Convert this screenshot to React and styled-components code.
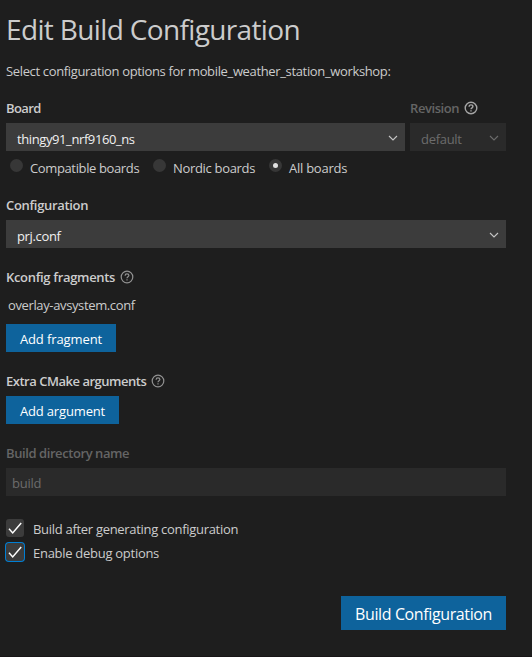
import React from "react";
import styled, { createGlobalStyle } from "styled-components";

const GlobalStyle = createGlobalStyle`
  * { box-sizing: border-box; }
  body {
    margin: 0;
    background: #1e1e1e;
    color: #cccccc;
    font: 400 13px/18px "Open Sans", "Noto Sans", sans-serif;
  }
`;

const Page = styled.main`
  height: 657px;
  padding: 10px 26px 0 6px;
  display: flex;
  flex-direction: column;
  background: #1e1e1e;
  border-bottom: 1px solid #181517;
`;

const Title = styled.h1`
  margin: 0;
  height: 40px;
  font-size: 28px;
  line-height: 38px;
  font-weight: 400;
  letter-spacing: -0.64px;
  white-space: nowrap;
`;

const Intro = styled.p`
  margin: 12px 0 0;
  letter-spacing: -0.35px;
  white-space: nowrap;
`;

const Section = styled.section`
  margin-top: ${(p) => p.$gap}px;
  width: ${(p) => (p.$width ? `${p.$width}px` : "auto")};
`;

const BoardRow = styled.div`
  display: flex;
  gap: 5px;
  margin-top: 19px;
`;

const Label = styled.div`
  display: flex;
  align-items: center;
  gap: 5px;
  height: 18px;
  margin-bottom: 6px;
  font-weight: 600;
  letter-spacing: ${(p) => p.$spacing}px;
  color: ${(p) => (p.$disabled ? "#656565" : "#cccccc")};
  white-space: nowrap;
`;

const Field = styled.div`
  display: flex;
  justify-content: space-between;
  align-items: center;
  height: 28px;
  padding: ${(p) => (p.$input ? "2px 6px 0" : "4px 6px 0 11px")};
  background: ${(p) => (p.$disabled ? "#2a2a2a" : "#3c3c3c")};
  color: ${(p) => (p.$disabled ? "#6c6c6c" : "#f0f0f0")};
  letter-spacing: ${(p) => p.$spacing}px;
`;

const Chevron = styled.svg`
  width: 12px;
  height: 12px;
  margin-top: -3px;
  fill: none;
  stroke: ${(p) => (p.$disabled ? "#6c6c6c" : "#c5c5c5")};
  stroke-width: 1.1;
`;

const HelpSvg = styled.svg`
  width: 14px;
  height: 14px;
  fill: none;
  stroke: ${(p) => (p.$bright ? "#a5a5a5" : "#929292")};
  stroke-width: ${(p) => (p.$bright ? 1.4 : 1.2)};
`;

const RadioGroup = styled.div`
  display: flex;
  height: 30px;
  padding: 5px 0 0 4px;
`;

const Radio = styled.label`
  display: flex;
  width: ${(p) => p.$width}px;
  letter-spacing: ${(p) => p.$spacing}px;
  padding-top: 3px;
  white-space: nowrap;
`;

const RadioDot = styled.span`
  display: grid;
  place-items: center;
  flex: none;
  width: 13px;
  height: 13px;
  margin: 0 7px 0 0;
  border-radius: 50%;
  background: #373737;

  &::after {
    content: "";
    width: 5px;
    height: 5px;
    border-radius: 50%;
    background: ${(p) => (p.$on ? "#e2e2e2" : "transparent")};
  }
`;

const Fragment = styled.div`
  margin: 0 0 10px 2px;
  padding-top: 4px;
  letter-spacing: -0.37px;
`;

const Button = styled.button`
  display: block;
  width: ${(p) => p.$width}px;
  height: ${(p) => (p.$large ? 34 : 28)}px;
  padding: ${(p) => (p.$large ? 2 : 1)}px 0 0;
  border: 0;
  background: #0e639c;
  color: #ffffff;
  font: inherit;
  font-size: ${(p) => (p.$large ? 16 : 13)}px;
  letter-spacing: ${(p) => p.$spacing}px;
`;

const Checks = styled.div`
  margin-top: 23px;
  display: flex;
  flex-direction: column;
  gap: 6px;
`;

const Check = styled.label`
  display: flex;
  gap: 9px;
  height: 18px;
  letter-spacing: ${(p) => p.$spacing}px;
`;

const CheckText = styled.span`
  padding-top: 1px;
`;

const CheckBox = styled.span`
  width: 18px;
  height: 18px;
  border-radius: 3px;
  background: #3c3c3c;
  box-shadow: ${(p) => (p.$focused ? "0 0 0 1px #007fd4" : "none")};

  svg {
    display: block;
    width: 18px;
    height: 18px;
    fill: none;
    stroke: #ffffff;
    stroke-width: 1.5;
  }
`;

const Footer = styled.footer`
  display: flex;
  justify-content: flex-end;
  margin-top: 35px;
`;

function Help({ bright }) {
  return (
    <HelpSvg viewBox="0 0 14 14" $bright={bright}>
      <circle cx="7" cy="7" r="5.8" />
      <path d="M5.1 5.7C5.1 4.5 5.9 3.9 7 3.9s1.9.7 1.9 1.7C8.9 6.8 7 6.9 7 8.3" />
      <path d="M7 9.2v1.3" />
    </HelpSvg>
  );
}

function Select({ value, disabled, spacing }) {
  return (
    <Field $disabled={disabled} $spacing={spacing}>
      {value}
      <Chevron viewBox="0 0 12 12" $disabled={disabled}>
        <path d="M2 4l4 4 4-4" />
      </Chevron>
    </Field>
  );
}

const radios = [
  { text: "Compatible boards", width: 143, spacing: -0.37 },
  { text: "Nordic boards", width: 116, spacing: -0.32 },
  { text: "All boards", width: 90, spacing: -0.25 },
];
const selectedRadio = "All boards";

const checks = [
  { text: "Build after generating configuration", spacing: -0.3 },
  { text: "Enable debug options", spacing: -0.28, focused: true },
];

export default function App() {
  return (
    <Page>
      <GlobalStyle />
      <Title>Edit Build Configuration</Title>
      <Intro>Select configuration options for mobile_weather_station_workshop:</Intro>

      <BoardRow>
        <Section $gap={0} $width={399}>
          <Label $spacing={-0.6}>Board</Label>
          <Select value="thingy91_nrf9160_ns" spacing={-0.4} />
        </Section>
        <Section $gap={0} $width={96}>
          <Label $disabled $spacing={-0.42}>
            Revision <Help bright />
          </Label>
          <Select value="default" disabled spacing={-0.3} />
        </Section>
      </BoardRow>
      <RadioGroup>
        {radios.map((r) => (
          <Radio key={r.text} $width={r.width} $spacing={r.spacing}>
            <RadioDot $on={r.text === selectedRadio} />
            {r.text}
          </Radio>
        ))}
      </RadioGroup>

      <Section $gap={15}>
        <Label $spacing={-0.32}>Configuration</Label>
        <Select value="prj.conf" spacing={-0.35} />
      </Section>

      <Section $gap={20}>
        <Label $spacing={-0.32}>
          Kconfig fragments <Help />
        </Label>
        <Fragment>overlay-avsystem.conf</Fragment>
        <Button $width={110} $spacing={-0.1}>Add fragment</Button>
      </Section>

      <Section $gap={20}>
        <Label $spacing={-0.48}>
          Extra CMake arguments <Help />
        </Label>
        <Button $width={113} $spacing={-0.15}>Add argument</Button>
      </Section>

      <Section $gap={20}>
        <Label $disabled $spacing={-0.42}>Build directory name</Label>
        <Field $input $disabled $spacing={-0.25}>build</Field>
      </Section>

      <Checks>
        {checks.map((c) => (
          <Check key={c.text} $spacing={c.spacing}>
            <CheckBox $focused={c.focused}>
              <svg viewBox="0 0 18 18">
                <path d="M3 9.8l3.7 4.1L15.2 4" />
              </svg>
            </CheckBox>
            <CheckText>{c.text}</CheckText>
          </Check>
        ))}
      </Checks>

      <Footer>
        <Button $large $width={165} $spacing={-0.38}>Build Configuration</Button>
      </Footer>
    </Page>
  );
}
